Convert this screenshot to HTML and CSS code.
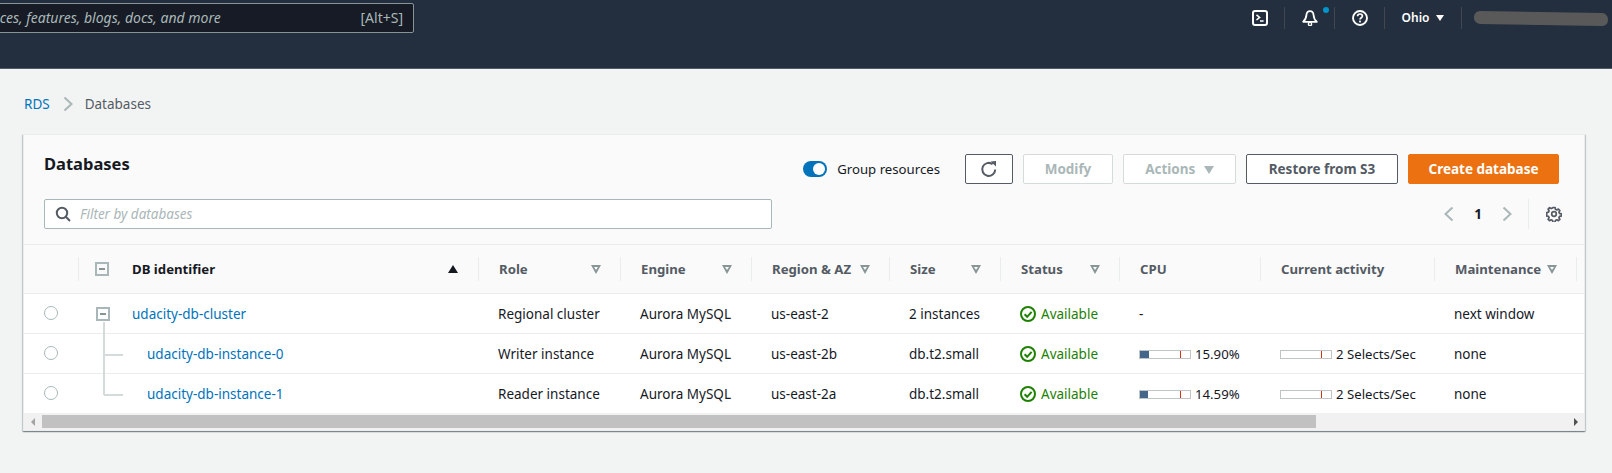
FILE: index.html
```html
<!DOCTYPE html>
<html lang="en">
<head>
    <meta charset="UTF-8">
    <title>Databases - RDS</title>
    <link rel="stylesheet" href="styles.css">
</head>
<body>
    <header class="topbar">
        <div class="search">
            <span class="search-text">Search for services, features, blogs, docs, and more</span>
            <span class="search-key">[Alt+S]</span>
        </div>
        <nav class="top-nav">
            <div class="top-item item-shell">
                <svg width="16" height="16" viewBox="0 0 16 16"><rect x="1" y="1" width="14" height="14" rx="2" fill="none" stroke="#fff" stroke-width="2"/><path d="M4.500 4.800 7.600 7.400 4.500 10M8 11h3.600" fill="none" stroke="#fff" stroke-width="1.600"/></svg>
            </div>
            <div class="top-item item-bell">
                <svg width="16" height="16" viewBox="0 0 16 16"><path d="M8 1.200C5.600 1.200 4.600 3 4.400 5.200 4.200 8 3.400 10 1.200 11.800h13.600C12.600 10 11.800 8 11.600 5.200 11.400 3 10.400 1.200 8 1.200Z" fill="none" stroke="#fff" stroke-width="1.800" stroke-linejoin="round"/><circle cx="8" cy="14" r="1.600" fill="none" stroke="#fff" stroke-width="1.400"/></svg>
                <span class="bell-dot"></span>
            </div>
            <div class="top-item item-help">
                <svg width="16" height="16" viewBox="0 0 16 16"><circle cx="8" cy="8" r="7" fill="none" stroke="#fff" stroke-width="1.900"/><path d="M5.600 6.200C5.600 4.800 6.700 4 8 4s2.400.9 2.400 2.100c0 1.600-2.400 1.700-2.400 3.500" fill="none" stroke="#fff" stroke-width="1.700"/><rect x="7.100" y="10.600" width="1.800" height="1.800" fill="#fff"/></svg>
            </div>
            <div class="top-item item-region">
                <span>Ohio</span>
                <span class="caret"></span>
            </div>
            <div class="top-item item-user">
                <span class="user-blur"></span>
            </div>
        </nav>
    </header>

    <main class="content">
        <div class="crumbs">
            <a class="link" href="#">RDS</a>
            <svg class="crumb-sep" width="10" height="16" viewBox="0 0 10 16"><path d="M1.500 1.500 8.500 8 1.500 14.500" fill="none" stroke="#aab7b8" stroke-width="2"/></svg>
            <span>Databases</span>
        </div>

        <section class="card">
            <div class="card-head">
                <div class="head-row">
                    <h1 class="card-title">Databases</h1>
                    <div class="toggle"><span class="knob"></span></div>
                    <span class="toggle-label">Group resources</span>
                    <button class="btn btn-refresh">
                        <svg width="18" height="18" viewBox="0 0 18 18"><path d="M15.200 9.500A6.500 6.500 0 1 1 12.600 4.200" fill="none" stroke="#545b64" stroke-width="2"/><path d="M10.500 1.500 16 1v5.500Z" fill="#545b64"/></svg>
                    </button>
                    <button class="btn btn-off btn-modify">Modify</button>
                    <button class="btn btn-off btn-actions">Actions <span class="caret caret-off"></span></button>
                    <button class="btn btn-restore">Restore from S3</button>
                    <button class="btn btn-primary">Create database</button>
                </div>
                <div class="filter-row">
                    <div class="filter">
                        <svg width="16" height="16" viewBox="0 0 16 16"><circle cx="7" cy="7" r="5.200" fill="none" stroke="#545b64" stroke-width="2"/><path d="M10.800 10.800 15 15" stroke="#545b64" stroke-width="2"/></svg>
                        <span>Filter by databases</span>
                    </div>
                    <div class="pager">
                        <svg width="10" height="16" viewBox="0 0 10 16"><path d="M8.500 1.500 1.500 8 8.500 14.500" fill="none" stroke="#aab7b8" stroke-width="2"/></svg>
                        <span class="page-num">1</span>
                        <svg width="10" height="16" viewBox="0 0 10 16"><path d="M1.500 1.500 8.500 8 1.500 14.500" fill="none" stroke="#aab7b8" stroke-width="2"/></svg>
                    </div>
                    <div class="settings">
                        <svg width="16" height="16" viewBox="0 0 16 16"><path d="M6.800 1h2.400l.4 2 1.500.7 1.800-1 1.600 1.700-1 1.700.6 1.500 2 .5v2.400l-2 .4-.6 1.500 1 1.800-1.600 1.500-1.800-1-1.500.7-.4 2H6.800l-.4-2-1.500-.7-1.800 1-1.600-1.500 1-1.800-.6-1.500-2-.4V6.600l2-.5.6-1.500-1-1.700L3.100 1.200l1.800 1 1.500-.7Z" fill="none" stroke="#545b64" stroke-width="1.900" stroke-linejoin="round" transform="translate(.8 .6) scale(.9)"/><circle cx="8" cy="8" r="2.300" fill="none" stroke="#545b64" stroke-width="1.700"/></svg>
                    </div>
                </div>
            </div>

            <div class="table-wrap">
                <table class="db-table">
                    <colgroup>
                        <col class="c-select"><col class="c-id"><col class="c-role"><col class="c-engine"><col class="c-region"><col class="c-size"><col class="c-status"><col class="c-cpu"><col class="c-activity"><col class="c-maint"><col class="c-end">
                    </colgroup>
                    <thead>
                        <tr>
                            <th></th>
                            <th>
                                <div class="th-in th-id">
                                    <span class="tree-box"></span>
                                    <span class="th-dark">DB identifier</span>
                                    <span class="sort-up"></span>
                                </div>
                            </th>
                            <th><div class="th-in">Role <span class="sort-none"></span></div></th>
                            <th><div class="th-in">Engine <span class="sort-none"></span></div></th>
                            <th><div class="th-in">Region &amp; AZ <span class="sort-none"></span></div></th>
                            <th><div class="th-in">Size <span class="sort-none"></span></div></th>
                            <th><div class="th-in">Status <span class="sort-none"></span></div></th>
                            <th><div class="th-in">CPU</div></th>
                            <th><div class="th-in">Current activity</div></th>
                            <th><div class="th-in">Maintenance <span class="sort-none"></span></div></th>
                            <th><div class="th-in"></div></th>
                        </tr>
                    </thead>
                    <tbody>
                        <tr>
                            <td><span class="radio"></span></td>
                            <td class="id-cell"><span class="tree-box tree-row"></span><a class="link" href="#">udacity-db-cluster</a><span class="tree-v"></span></td>
                            <td>Regional cluster</td>
                            <td>Aurora MySQL</td>
                            <td>us-east-2</td>
                            <td>2 instances</td>
                            <td><span class="status"><svg width="16" height="16" viewBox="0 0 16 16"><circle cx="8" cy="8" r="7" fill="none" stroke="#1d8102" stroke-width="2"/><path d="M4.600 8.200 7.200 10.800 11.600 5.800" fill="none" stroke="#1d8102" stroke-width="2"/></svg>Available</span></td>
                            <td>-</td>
                            <td></td>
                            <td>next window</td>
                            <td></td>
                        </tr>
                        <tr>
                            <td><span class="radio"></span></td>
                            <td class="id-cell child"><span class="tree-h"></span><a class="link" href="#">udacity-db-instance-0</a></td>
                            <td>Writer instance</td>
                            <td>Aurora MySQL</td>
                            <td>us-east-2b</td>
                            <td>db.t2.small</td>
                            <td><span class="status"><svg width="16" height="16" viewBox="0 0 16 16"><circle cx="8" cy="8" r="7" fill="none" stroke="#1d8102" stroke-width="2"/><path d="M4.600 8.200 7.200 10.800 11.600 5.800" fill="none" stroke="#1d8102" stroke-width="2"/></svg>Available</span></td>
                            <td><span class="metric"><span class="meter"><span class="meter-fill" style="width: 9px"></span><span class="meter-tick"></span></span>15.90%</span></td>
                            <td><span class="metric"><span class="meter"><span class="meter-tick"></span></span>2 Selects/Sec</span></td>
                            <td>none</td>
                            <td></td>
                        </tr>
                        <tr>
                            <td><span class="radio"></span></td>
                            <td class="id-cell child"><span class="tree-h"></span><a class="link" href="#">udacity-db-instance-1</a></td>
                            <td>Reader instance</td>
                            <td>Aurora MySQL</td>
                            <td>us-east-2a</td>
                            <td>db.t2.small</td>
                            <td><span class="status"><svg width="16" height="16" viewBox="0 0 16 16"><circle cx="8" cy="8" r="7" fill="none" stroke="#1d8102" stroke-width="2"/><path d="M4.600 8.200 7.200 10.800 11.600 5.800" fill="none" stroke="#1d8102" stroke-width="2"/></svg>Available</span></td>
                            <td><span class="metric"><span class="meter"><span class="meter-fill" style="width: 8px"></span><span class="meter-tick"></span></span>14.59%</span></td>
                            <td><span class="metric"><span class="meter"><span class="meter-tick"></span></span>2 Selects/Sec</span></td>
                            <td>none</td>
                            <td></td>
                        </tr>
                    </tbody>
                </table>
            </div>

            <div class="scrollbar">
                <span class="arrow arrow-left"></span>
                <div class="track"><div class="thumb"></div></div>
                <span class="arrow arrow-right"></span>
            </div>
        </section>
    </main>
</body>
</html>
```

FILE: styles.css
```css
* {
    box-sizing: border-box;
}

body {
    margin: 0;
    height: 473px;
    overflow: hidden;
    font-family: "Noto Sans", Arial, sans-serif;
    font-size: 13.5px;
    line-height: 20px;
    color: #16191f;
    background-color: #f2f3f3;
}

.link {
    color: #0073bb;
    text-decoration: none;
}

/* Top navigation */
.topbar {
    display: flex;
    justify-content: space-between;
    height: 69px;
    padding-top: 3px;
    overflow: hidden;
    background-color: #232f3e;
    border-bottom: 1px solid #545b64;
}

.search {
    display: flex;
    justify-content: space-between;
    align-items: center;
    flex-shrink: 0;
    width: 514px;
    height: 30px;
    margin-left: -100px;
    padding: 0 10px 0 0;
    font-size: 14px;
    color: #aab7b8;
    background-color: #161b25;
    border: 1px solid #879596;
    border-radius: 2px;
}

.search-text {
    margin-left: 3px;
    font-style: italic;
    white-space: nowrap;
}

.top-nav {
    display: flex;
    align-items: flex-start;
    height: 22px;
    margin-top: 4px;
    color: #fff;
}

.top-item {
    position: relative;
    display: flex;
    align-items: center;
    justify-content: center;
    height: 22px;
}

.top-item + .top-item {
    border-left: 1px solid #414750;
}

.item-shell {
    justify-content: flex-end;
    width: 64px;
    padding-right: 16px;
}

.item-bell,
.item-help {
    width: 50px;
}

.item-region {
    gap: 7px;
    width: 77px;
    font-size: 12px;
    font-weight: 600;
}

.item-user {
    width: 151px;
    justify-content: flex-start;
    padding-left: 12px;
}

.user-blur {
    display: block;
    width: 134px;
    height: 13px;
    background-color: #595959;
    border-radius: 6px;
    transform: rotate(1deg);
}

.bell-dot {
    position: absolute;
    top: 0;
    right: 5px;
    width: 6px;
    height: 6px;
    background-color: #0095c8;
    border-radius: 50%;
}

.caret {
    width: 0;
    height: 0;
    border-left: 4px solid transparent;
    border-right: 4px solid transparent;
    border-top: 6px solid #fff;
}

/* Page */
.content {
    padding: 0 27px 0 23px;
}

.crumbs {
    display: flex;
    align-items: center;
    height: 20px;
    margin: 25px 0 0 1px;
    color: #545b64;
}

.crumb-sep {
    margin: 0 12px 0 13px;
}

.card {
    margin-top: 20px;
    background-color: #fff;
    border: 1px solid #eaeded;
    box-shadow: 0 1px 1px 0 rgba(0, 28, 36, 0.3), 1px 1px 1px 0 rgba(0, 28, 36, 0.15), -1px 1px 1px 0 rgba(0, 28, 36, 0.15);
}

.card-head {
    height: 110px;
    padding: 19px 25px 0 20px;
    background-color: #fafafa;
    border-bottom: 1px solid #eaeded;
}

.head-row {
    display: flex;
    align-items: center;
    height: 30px;
}

.card-title {
    flex: 1;
    margin: -10px 0 0;
    font-size: 16.5px;
    font-weight: 700;
}

.toggle {
    display: flex;
    justify-content: flex-end;
    align-items: center;
    width: 24px;
    height: 16px;
    padding-right: 2px;
    background-color: #0073bb;
    border-radius: 8px;
}

.knob {
    width: 12px;
    height: 12px;
    background-color: #fff;
    border-radius: 50%;
}

.toggle-label {
    margin: 0 25px 0 10px;
    font-size: 13.2px;
}

.btn {
    height: 30px;
    margin-left: 10px;
    padding: 0;
    font-family: inherit;
    font-size: 13.5px;
    font-weight: 700;
    color: #545b64;
    background-color: #fff;
    border: 1px solid #545b64;
    border-radius: 2px;
}

.btn-refresh {
    display: flex;
    align-items: center;
    justify-content: center;
    width: 48px;
    margin-left: 0;
}

.btn-off {
    color: #aab7b8;
    border-color: #d5dbdb;
}

.btn-modify {
    width: 90px;
}

.btn-actions {
    width: 113px;
}

.caret-off {
    display: inline-block;
    margin-left: 5px;
    border-left-width: 5px;
    border-right-width: 5px;
    border-top: 8px solid #aab7b8;
}

.btn-restore {
    width: 152px;
}

.btn-primary {
    width: 151px;
    color: #fff;
    background-color: #ec7211;
    border-color: #ec7211;
}

.filter-row {
    display: flex;
    align-items: center;
    height: 30px;
    margin-top: 15px;
}

.filter {
    display: flex;
    align-items: center;
    gap: 9px;
    width: 728px;
    height: 30px;
    padding-left: 10px;
    font-style: italic;
    color: #aab7b8;
    background-color: #fff;
    border: 1px solid #aab7b8;
    border-radius: 2px;
}

.pager {
    display: flex;
    align-items: center;
    margin-left: auto;
    margin-right: 16px;
}

.page-num {
    width: 48px;
    font-weight: 700;
    text-align: center;
}

.settings {
    display: flex;
    align-items: center;
    height: 30px;
    margin-right: -3px;
    padding-left: 17px;
    border-left: 1px solid #eaeded;
}

/* Table */
.table-wrap {
    position: relative;
    overflow: hidden;
}

.db-table {
    width: 1560px;
    table-layout: fixed;
    border-collapse: collapse;
}

.c-select { width: 54px; }
.c-id { width: 400px; }
.c-role { width: 142px; }
.c-engine { width: 131px; }
.c-region { width: 138px; }
.c-size { width: 111px; }
.c-status { width: 119px; }
.c-cpu { width: 141px; }
.c-activity { width: 174px; }
.c-maint { width: 142px; }
.c-end { width: 8px; }

.db-table th {
    height: 48px;
    padding: 1px 0 0;
    font-size: 13.2px;
    font-weight: 700;
    text-align: left;
    color: #545b64;
    background-color: #fafafa;
    border-bottom: 1px solid #eaeded;
}

.th-in {
    display: flex;
    align-items: center;
    justify-content: space-between;
    height: 24px;
    padding: 0 19px 0 20px;
    white-space: nowrap;
    border-left: 1px solid #eaeded;
}

.th-id {
    justify-content: flex-start;
    padding-left: 16px;
}

.th-dark {
    margin-left: 23px;
    color: #16191f;
}

.tree-box {
    position: relative;
    flex-shrink: 0;
    display: inline-block;
    width: 14px;
    height: 14px;
    border: 2px solid #aab7b8;
}

.tree-box::after {
    content: "";
    position: absolute;
    left: 2px;
    top: 4px;
    width: 6px;
    height: 2px;
    background-color: #879596;
}

.sort-up {
    width: 0;
    height: 0;
    margin-left: auto;
    margin-right: 1px;
    border-left: 5px solid transparent;
    border-right: 5px solid transparent;
    border-bottom: 8px solid #16191f;
}

.sort-none {
    position: relative;
    width: 0;
    height: 0;
    border-left: 5px solid transparent;
    border-right: 5px solid transparent;
    border-top: 9px solid #879596;
}

.sort-none::after {
    content: "";
    position: absolute;
    left: -2px;
    top: -7px;
    width: 0;
    height: 0;
    border-left: 2px solid transparent;
    border-right: 2px solid transparent;
    border-top: 3px solid #fafafa;
}

.db-table td {
    height: 40px;
    padding: 2px 0 0 20px;
    white-space: nowrap;
    background-color: #fff;
    border-bottom: 1px solid #eaeded;
}

.db-table tbody tr:last-child td {
    border-bottom: 0;
}

.radio {
    display: block;
    width: 14px;
    height: 14px;
    margin-top: -2px;
    background-color: #fff;
    border: 1px solid #aab7b8;
    border-radius: 50%;
}

.db-table td.id-cell {
    position: relative;
    padding-left: 18px;
}

.tree-row {
    margin: 0 22px 0 0;
    vertical-align: -2px;
}

.db-table td.child {
    padding-left: 69px;
}

/* tree connector lines */
.tree-v {
    position: absolute;
    left: 25px;
    top: 28px;
    width: 2px;
    height: 73px;
    background-color: #d5dbdb;
    z-index: 1;
}

.tree-h {
    position: absolute;
    left: 26px;
    top: 20px;
    width: 19px;
    height: 2px;
    background-color: #d5dbdb;
}

.status {
    display: flex;
    align-items: center;
    gap: 5px;
    color: #1d8102;
}

.metric {
    display: flex;
    align-items: center;
    gap: 4px;
    font-size: 13.2px;
}

.meter {
    position: relative;
    display: block;
    width: 52px;
    height: 9px;
    background-color: #fff;
    border: 1px solid #bfc4c4;
}

.meter-fill {
    display: block;
    height: 7px;
    background-color: #44668a;
}

.meter-tick {
    position: absolute;
    left: 40px;
    top: 0;
    width: 1px;
    height: 7px;
    background-color: #d13212;
}

/* Scrollbar */
.scrollbar {
    display: flex;
    align-items: center;
    height: 17px;
    background-color: #f1f1f1;
}

.track {
    flex: 1;
    height: 13px;
    padding-left: 4px;
}

.thumb {
    width: 1274px;
    height: 13px;
    background-color: #c1c1c1;
}

.arrow {
    flex-shrink: 0;
    width: 0;
    height: 0;
    border-top: 4px solid transparent;
    border-bottom: 4px solid transparent;
}

.arrow-left {
    margin: 0 3px 0 7px;
    border-right: 4px solid #a3a3a3;
}

.arrow-right {
    margin: 0 6px 0 3px;
    border-left: 4px solid #505050;
}
```
